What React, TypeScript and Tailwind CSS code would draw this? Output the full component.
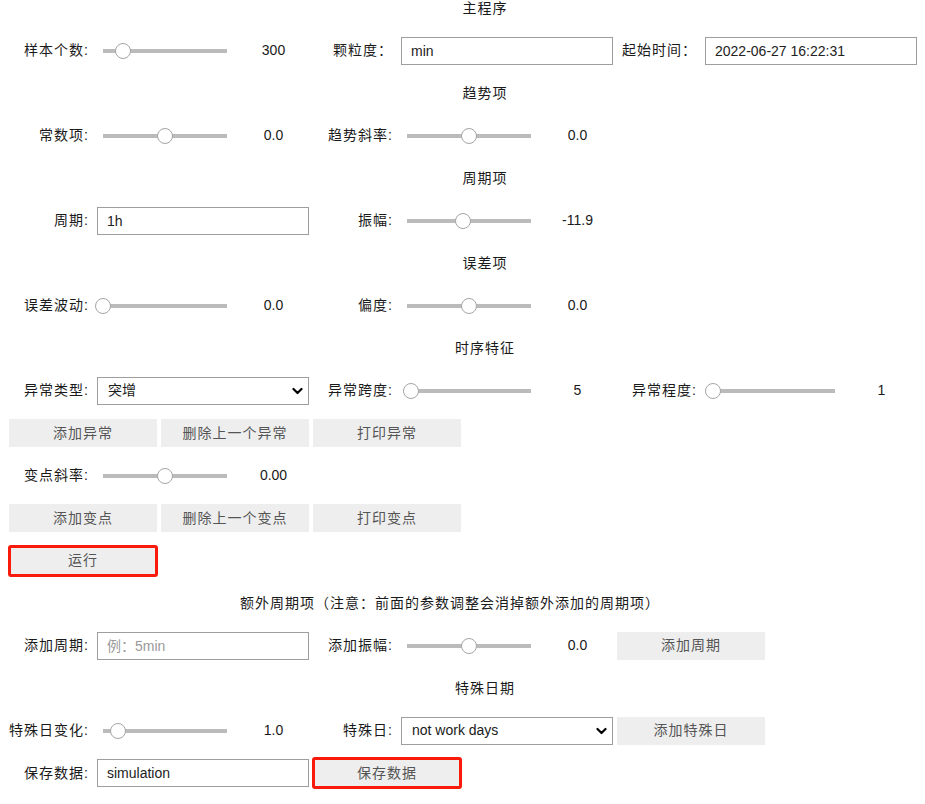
import React from 'react';

type SliderProps = { label: string; value: string; pct: number };
type TextProps = { label: string; value?: string; placeholder?: string };
type SelectProps = { label: string; value: string };

const Label: React.FC<{ text: string }> = ({ text }) => (
  <div className="w-[80px] shrink-0 whitespace-nowrap text-right tracking-[1px]">{text}</div>
);

const SliderWidget: React.FC<SliderProps> = ({ label, value, pct }) => (
  <div className="mx-[2px] flex h-[32px] w-[300px] items-center">
    <Label text={label} />
    <div className="ml-[8px] w-[141px] shrink-0 pl-[6px] pr-[11px]">
      <div className="relative h-[4px] bg-[#bbbbbb]">
        <div
          className="absolute top-1/2 h-[16px] w-[16px] -translate-x-1/2 -translate-y-1/2 rounded-full border border-[#a5a5a5] bg-white"
          style={{ left: `${pct}%` }}
        />
      </div>
    </div>
    <div className="flex-1 text-center">{value}</div>
  </div>
);

const TextWidget: React.FC<TextProps> = ({ label, value, placeholder }) => (
  <div className="mx-[2px] flex h-[32px] w-[300px] items-center">
    <Label text={label} />
    <input
      readOnly
      defaultValue={value}
      placeholder={placeholder}
      className="ml-[8px] h-[28px] min-w-0 flex-1 border border-[#9e9e9e] bg-white px-[9px] text-[14px] text-[#222] outline-none placeholder:text-[#9a9a9a]"
    />
  </div>
);

const SelectWidget: React.FC<SelectProps> = ({ label, value }) => (
  <div className="mx-[2px] flex h-[32px] w-[300px] items-center">
    <Label text={label} />
    <div className="ml-[8px] flex h-[28px] min-w-0 flex-1 items-center justify-between border border-[#9e9e9e] bg-white pl-[10px] pr-[5px]">
      <span>{value}</span>
      <svg width="11" height="8" viewBox="0 0 11 8" fill="none">
        <polyline points="1.5,2 5.5,6 9.5,2" stroke="#000" strokeWidth="2.2" strokeLinecap="round" strokeLinejoin="round" />
      </svg>
    </div>
  </div>
);

const Btn: React.FC<{ text: string }> = ({ text }) => (
  <button className="mx-[2px] h-[28px] w-[148px] shrink-0 bg-[#eeeeee] tracking-[1px] text-[#555]">{text}</button>
);

const RedBtn: React.FC<{ text: string; className?: string }> = ({ text, className }) => (
  <button
    className={`h-[32px] w-[150px] shrink-0 rounded-[3px] border-[3px] border-[#fa1a0c] bg-[#eeeeee] tracking-[1px] text-[#555] ${className ?? ''}`}
  >
    {text}
  </button>
);

const Title: React.FC<{ text: string }> = ({ text }) => (
  <div className="flex h-[42.5px] items-center justify-center pl-[45px] tracking-[1px]">{text}</div>
);

const Row: React.FC<{ children: React.ReactNode; className?: string }> = ({ children, className }) => (
  <div className={`flex h-[42.5px] items-center pl-[7px] ${className ?? ''}`}>{children}</div>
);

export default function App() {
  return (
    <div className="min-h-screen overflow-hidden bg-white font-['Liberation_Sans','Noto_Sans_CJK_SC',sans-serif] text-[14px] text-[#1a1a1a]">
      <div className="-mt-[13px]">
        <Title text="主程序" />
        <Row>
          <SliderWidget label="样本个数:" value="300" pct={16} />
          <TextWidget label="颗粒度：" value="min" />
          <TextWidget label="起始时间：" value="2022-06-27 16:22:31" />
        </Row>

        <Title text="趋势项" />
        <Row>
          <SliderWidget label="常数项:" value="0.0" pct={50} />
          <SliderWidget label="趋势斜率:" value="0.0" pct={50} />
        </Row>

        <Title text="周期项" />
        <Row>
          <TextWidget label="周期:" value="1h" />
          <SliderWidget label="振幅:" value="-11.9" pct={45} />
        </Row>

        <Title text="误差项" />
        <Row>
          <SliderWidget label="误差波动:" value="0.0" pct={0} />
          <SliderWidget label="偏度:" value="0.0" pct={50} />
        </Row>

        <Title text="时序特征" />
        <Row>
          <SelectWidget label="异常类型:" value="突增" />
          <SliderWidget label="异常跨度:" value="5" pct={3} />
          <SliderWidget label="异常程度:" value="1" pct={2} />
        </Row>
        <Row>
          <Btn text="添加异常" />
          <Btn text="删除上一个异常" />
          <Btn text="打印异常" />
        </Row>
        <Row>
          <SliderWidget label="变点斜率:" value="0.00" pct={50} />
        </Row>
        <Row>
          <Btn text="添加变点" />
          <Btn text="删除上一个变点" />
          <Btn text="打印变点" />
        </Row>
        <Row className="!pl-[8px]">
          <RedBtn text="运行" />
        </Row>

        <div className="flex h-[42.5px] items-center pl-[240px] tracking-[1px]">
          额外周期项（注意：前面的参数调整会消掉额外添加的周期项）
        </div>
        <Row>
          <TextWidget label="添加周期:" placeholder="例：5min" />
          <SliderWidget label="添加振幅:" value="0.0" pct={50} />
          <Btn text="添加周期" />
        </Row>

        <Title text="特殊日期" />
        <Row>
          <SliderWidget label="特殊日变化:" value="1.0" pct={12} />
          <SelectWidget label="特殊日:" value="not work days" />
          <Btn text="添加特殊日" />
        </Row>
        <Row>
          <TextWidget label="保存数据:" value="simulation" />
          <RedBtn text="保存数据" className="ml-[1px]" />
        </Row>
      </div>
    </div>
  );
}
